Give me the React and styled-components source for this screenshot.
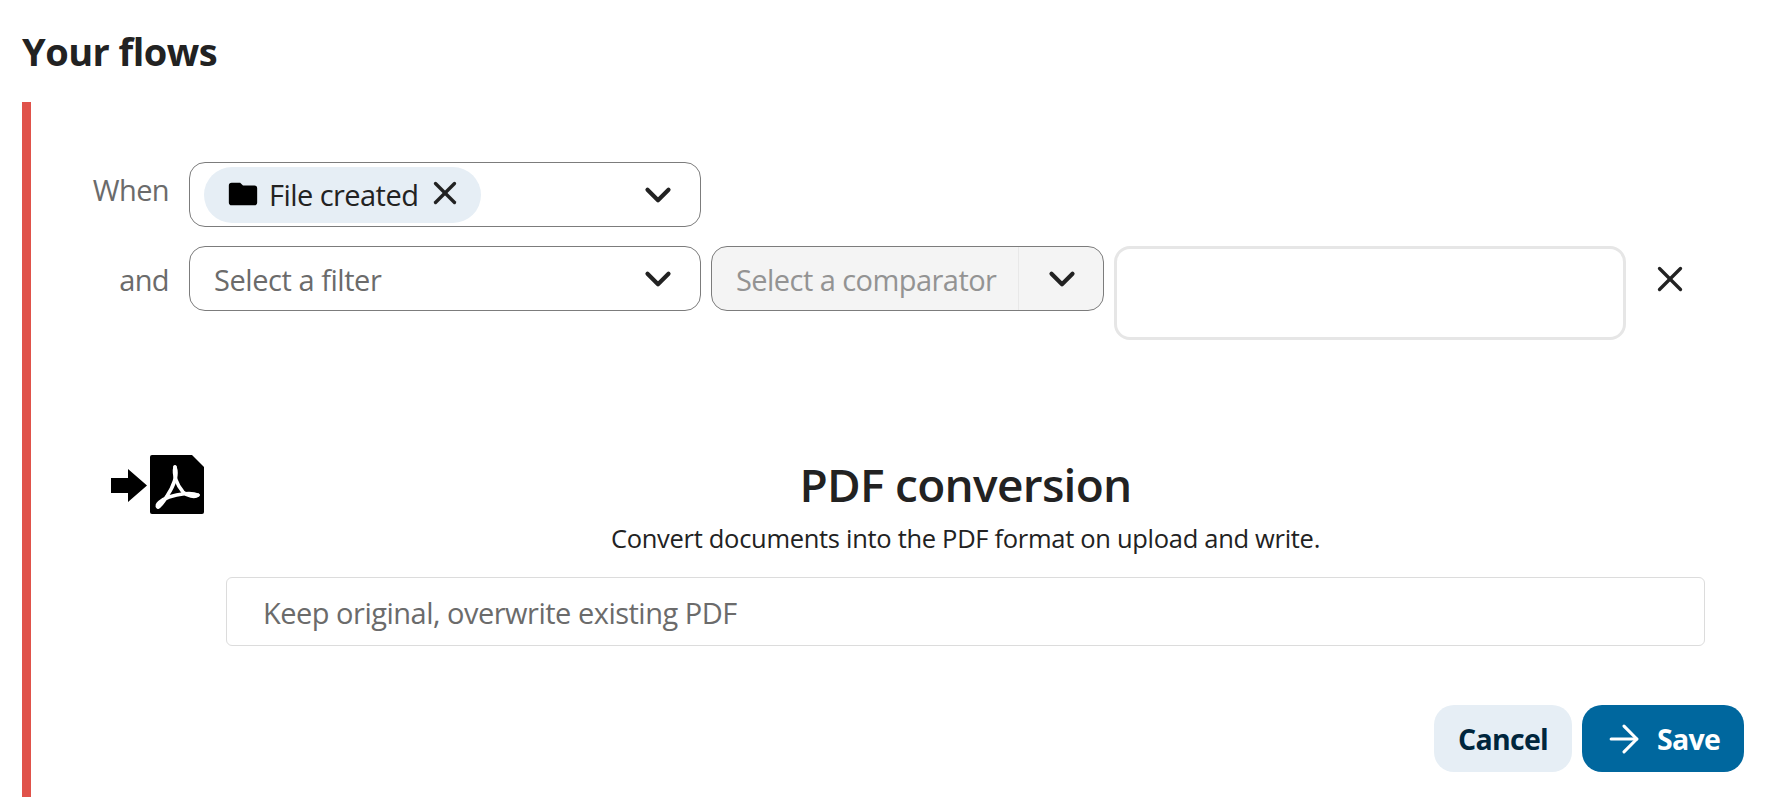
import React from 'react';
import styled, { createGlobalStyle } from 'styled-components';
import { ChevronDown, X, ArrowRight } from 'lucide-react';

const Global = createGlobalStyle`
  html, body { margin: 0; background: #fff; overflow: hidden; }
  body { font-family: "Open Sans", "Noto Sans", sans-serif; color: #222; }
`;
const Page = styled.div`height: 797px; padding: 0 32px 0 22px; box-sizing: border-box; overflow: hidden;`;
const Heading = styled.h2`margin: 0; height: 102px; padding-top: 27px; box-sizing: border-box; font-size: 38px; line-height: 48px; font-weight: 700; letter-spacing: -0.55px; color: #222;`;
const Rule = styled.section`border-left: 9px solid #e0524a; height: 695px; box-sizing: border-box; padding: 60px 0 0 0; display: flex; flex-direction: column;`;
const Row = styled.div`display: flex; align-items: flex-start; gap: 10px; margin-bottom: 19px;`;
const Label = styled.div`width: 138px; margin-right: 10px; text-align: right; font-size: 29px; line-height: ${p => p.$line}px; letter-spacing: -0.6px; color: #6b6b6b; flex: none;`;
const Select = styled.div`width: 512px; height: 65px; box-sizing: border-box; border: 1px solid #7c7c7c; border-radius: 16px; display: flex; align-items: center; padding: 0 21px 0 ${p => p.$pad}px; flex: none; background: #fff;`;
const Placeholder = styled.span`flex: 1; padding-top: 2px; font-size: 29px; letter-spacing: -0.45px; color: #6b6b6b;`;
const Chip = styled.span`display: flex; align-items: center; height: 56px; padding: 0 17px 0 22px; background: #e6eef5; border-radius: 28px; font-size: 29px; letter-spacing: -0.55px; color: #222; margin-right: auto;`;
const Folder = styled.svg`width: 34px; height: 34px; margin-right: 9px; margin-top: -1px;`;
const ChipClose = styled(X)`margin-left: 8px; margin-top: -4px; color: #222;`;
const Comparator = styled.div`width: 393px; height: 65px; box-sizing: border-box; border: 1px solid #7c7c7c; border-radius: 16px; background: #f4f4f4; display: flex; align-items: stretch; flex: none;`;
const CompText = styled.span`flex: 1; padding-left: 24px; font-size: 29px; line-height: 65px; letter-spacing: -0.55px; color: #939393; white-space: nowrap;`;
const CompArrow = styled.span`width: 85px; flex: none; padding-left: 2px; box-sizing: border-box; border-left: 1px solid #e8e8e8; display: flex; align-items: center; justify-content: center;`;
const ValueInput = styled.div`width: 512px; height: 94px; box-sizing: border-box; border: 3px solid #e6e6e6; border-radius: 16px; flex: none;`;
const RemoveBtn = styled.span`width: 68px; height: 65px; display: flex; align-items: center; justify-content: center; flex: none;`;
const Operation = styled.div`display: flex; align-items: flex-start; margin-top: 96px;`;
const OpIcon = styled.svg`width: 93px; height: 59px; margin-left: 80px; flex: none;`;
const OpBody = styled.div`margin-left: 22px; width: 1479px; text-align: center; flex: none;`;
const OpTitle = styled.h3`margin: -1px 0 0; font-size: 46px; line-height: 60px; font-weight: 600; letter-spacing: -0.7px; color: #222;`;
const OpDesc = styled.p`margin: 7px 0 0; font-size: 25.5px; line-height: 34px; letter-spacing: -0.3px; color: #222;`;
const OpInput = styled.div`margin-top: 22px; height: 69px; box-sizing: border-box; border: 1px solid #dcdcdc; border-radius: 6px; padding-left: 36px; text-align: left; font-size: 29px; line-height: 70px; letter-spacing: -0.5px; color: #6b6b6b;`;
const Actions = styled.div`display: flex; justify-content: flex-end; gap: 10px; margin-top: 59px;`;
const Button = styled.button`height: 67px; padding: 0 ${p => p.$primary ? 4 : 0}px 0 0; border: 0; border-radius: 20px; font: 700 28.5px "Open Sans", sans-serif; letter-spacing: -0.7px; display: flex; align-items: center; justify-content: center; gap: 11px; width: ${p => p.$w}px; background: ${p => p.$primary ? '#00679e' : '#e6eef5'}; color: ${p => p.$primary ? '#fff' : '#00263d'};`;

const chevron = <ChevronDown size={42} strokeWidth={2.4} color="#222" />;

export default function App() {
  return (
    <Page>
      <Global />
      <Heading>Your flows</Heading>
      <Rule>
        <Row>
          <Label $line={56}>When</Label>
          <Select $pad={14}>
            <Chip>
              <Folder viewBox="0 0 24 24" fill="#000"><path d="M10 4H4a2 2 0 0 0-2 2v12a2 2 0 0 0 2 2h16a2 2 0 0 0 2-2V8a2 2 0 0 0-2-2h-8z" /></Folder>
              File created
              <ChipClose size={38} strokeWidth={2.1} />
            </Chip>
            {chevron}
          </Select>
        </Row>
        <Row>
          <Label $line={68}>and</Label>
          <Select $pad={24}>
            <Placeholder>Select a filter</Placeholder>
            {chevron}
          </Select>
          <Comparator>
            <CompText>Select a comparator</CompText>
            <CompArrow>{chevron}</CompArrow>
          </Comparator>
          <ValueInput />
          <RemoveBtn><X size={42} strokeWidth={1.9} color="#222" /></RemoveBtn>
        </Row>
        <Operation>
          <OpIcon viewBox="0 0 93 59">
            <path d="M0 23h17V14l19 16.500-19 16.500V38H0z" fill="#000" />
            <path d="M39 2a2 2 0 0 1 2-2h40l12 12v45a2 2 0 0 1-2 2H41a2 2 0 0 1-2-2z" fill="#000" />
            <g fill="none" stroke="#fff" strokeWidth="3.500" strokeLinecap="round">
              <path d="M64 12C62 20 66 30 72 37C76 41 84 43 87 40" />
              <path d="M64 12C67 20 62 32 56 41C53 46 50 51 47 52" />
              <path d="M47 52C44 50 50 45 58 42C67 39 80 37 87 40" />
            </g>
          </OpIcon>
          <OpBody>
            <OpTitle>PDF conversion</OpTitle>
            <OpDesc>Convert documents into the PDF format on upload and write.</OpDesc>
            <OpInput>Keep original, overwrite existing PDF</OpInput>
          </OpBody>
        </Operation>
        <Actions>
          <Button $w={138}>Cancel</Button>
          <Button $w={162} $primary><ArrowRight size={44} strokeWidth={1.7} />Save</Button>
        </Actions>
      </Rule>
    </Page>
  );
}
